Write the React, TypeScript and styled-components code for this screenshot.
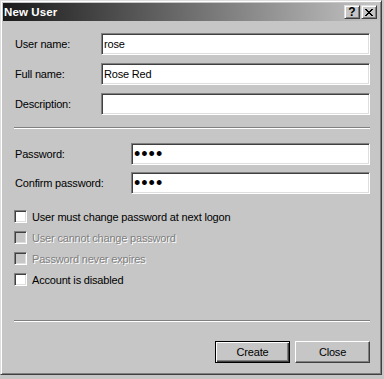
import React from "react"
import styled, { createGlobalStyle } from "styled-components"

const FACE = "#c6c6c6";

const GlobalStyle = createGlobalStyle`
  html, body {
    margin: 0;
    padding: 0;
    background: ${FACE};
  }
  body {
    font-family: "Liberation Sans", Arial, sans-serif;
    font-size: 11px;
    letter-spacing: -0.18px;
    color: #000;
  }
`;

const Window = styled.div`
  box-sizing: border-box;
  width: 382px;
  height: 375px;
  padding: 2px;
  background: ${FACE};
  border: 1px solid;
  border-color: #dedede #404040 #404040 #dedede;
  box-shadow: inset 1px 1px #fff, inset -1px -1px #808080;
  display: flex;
  flex-direction: column;
`;

const TitleBar = styled.div`
  height: 18px;
  flex-shrink: 0;
  display: flex;
  align-items: center;
  padding: 0 2px 0 1px;
  background: linear-gradient(to right, #1a1a1a 0%, #5e5e5e 40%, #c4c4c4 100%);
`;

const Title = styled.span`
  flex: 1;
  color: #fff;
  font-weight: bold;
  font-size: 11.5px;
  letter-spacing: 0.1px;
  line-height: 18px;
`;

const CaptionButton = styled.button`
  box-sizing: border-box;
  width: 16px;
  height: 14px;
  margin: 0 0 0 1px;
  padding: 0;
  background: ${FACE};
  border: 1px solid;
  border-color: #dedede #404040 #404040 #dedede;
  box-shadow: inset 1px 1px #fff, inset -1px -1px #808080;
  display: flex;
  align-items: center;
  justify-content: center;
  font-family: "Liberation Sans", Arial, sans-serif;
  font-weight: bold;
  font-size: 12px;
  line-height: 1;
  color: #000;
`;

const Body = styled.div`
  flex: 1;
  padding: 12px 9px 0 12px;
  display: flex;
  flex-direction: column;
`;

const FieldGrid = styled.div<{ $labelWidth: number; $gap: number }>`
  display: grid;
  grid-template-columns: ${p => p.$labelWidth}px 1fr;
  row-gap: ${p => p.$gap}px;
  align-items: center;
`;

const FieldLabel = styled.label`
  white-space: nowrap;
`;

const TextBox = styled.input<{ $secret?: boolean }>`
  box-sizing: border-box;
  width: 100%;
  height: 22px;
  margin: 0;
  padding: 0 2px;
  background: #fff;
  border: 1px solid;
  border-color: #808080 #fff #fff #808080;
  box-shadow: inset 1px 1px #404040, inset -1px -1px #dedede;
  outline: none;
  font-family: "Liberation Sans", Arial, sans-serif;
  font-size: ${p => (p.$secret ? "18px" : "11px")};
  letter-spacing: ${p => (p.$secret ? "1px" : "-0.18px")};
  color: #000;
`;

const Separator = styled.hr<{ $top: number; $bottom: number }>`
  height: 0;
  margin: ${p => p.$top}px 0 ${p => p.$bottom}px -1px;
  border: none;
  border-top: 1px solid #808080;
  border-bottom: 1px solid #fff;
`;

const CheckList = styled.div`
  margin-top: 12px;
  display: flex;
  flex-direction: column;
`;

const CheckRow = styled.label<{ $disabled?: boolean }>`
  height: 21px;
  margin-left: -1px;
  display: flex;
  align-items: center;
  gap: 5px;
  color: ${p => (p.$disabled ? "#808080" : "#000")};
  text-shadow: ${p => (p.$disabled ? "1px 1px 0 #fff" : "none")};
`;

const Box = styled.span<{ $disabled?: boolean }>`
  box-sizing: border-box;
  width: 13px;
  height: 13px;
  flex-shrink: 0;
  background: ${p => (p.$disabled ? FACE : "#fff")};
  border: 1px solid;
  border-color: #808080 #fff #fff #808080;
  box-shadow: inset 1px 1px #404040, inset -1px -1px #dedede;
`;

const ButtonRow = styled.div`
  display: flex;
  justify-content: flex-end;
  gap: 5px;
`;

const PushButton = styled.button<{ $default?: boolean }>`
  box-sizing: border-box;
  width: 75px;
  height: 22px;
  margin: 0;
  padding: 0;
  background: ${FACE};
  border: 1px solid;
  border-color: ${p => (p.$default ? "#000" : "#fff #404040 #404040 #fff")};
  box-shadow: ${p =>
    p.$default
      ? "inset 1px 1px #fff, inset -1px -1px #404040, inset -2px -2px #808080"
      : "inset -1px -1px #808080"};
  font-family: "Liberation Sans", Arial, sans-serif;
  font-size: 11px;
  letter-spacing: -0.18px;
  color: #000;
`;

const CloseGlyph = () => (
  <svg width="8" height="7" viewBox="0 0 8 7" shapeRendering="crispEdges">
    <path
      d="M0 0h2v1h-2zM6 0h2v1h-2zM1 1h2v1h-2zM5 1h2v1h-2zM2 2h4v1h-4zM3 3h2v1h-2zM2 4h4v1h-4zM1 5h2v1h-2zM5 5h2v1h-2zM0 6h2v1h-2zM6 6h2v1h-2z"
      fill="#000"
    />
  </svg>
);

const checks = [
  { text: "User must change password at next logon", disabled: false },
  { text: "User cannot change password", disabled: true },
  { text: "Password never expires", disabled: true },
  { text: "Account is disabled", disabled: false },
];

export default function App() {
  return (
    <>
      <GlobalStyle />
      <Window>
        <TitleBar>
          <Title>New User</Title>
          <CaptionButton>?</CaptionButton>
          <CaptionButton>
            <CloseGlyph />
          </CaptionButton>
        </TitleBar>
        <Body>
          <FieldGrid $labelWidth={86} $gap={8}>
            <FieldLabel>User name:</FieldLabel>
            <TextBox readOnly value="rose" />
            <FieldLabel>Full name:</FieldLabel>
            <TextBox readOnly value="Rose Red" />
            <FieldLabel>Description:</FieldLabel>
            <TextBox readOnly value="" />
          </FieldGrid>
          <Separator $top={12} $bottom={14} />
          <FieldGrid $labelWidth={116} $gap={7}>
            <FieldLabel>Password:</FieldLabel>
            <TextBox readOnly $secret value={"\u2022\u2022\u2022\u2022"} />
            <FieldLabel>Confirm password:</FieldLabel>
            <TextBox readOnly $secret value={"\u2022\u2022\u2022\u2022"} />
          </FieldGrid>
          <CheckList>
            {checks.map(c => (
              <CheckRow key={c.text} $disabled={c.disabled}>
                <Box $disabled={c.disabled} />
                {c.text}
              </CheckRow>
            ))}
          </CheckList>
          <Separator $top={30} $bottom={19} />
          <ButtonRow>
            <PushButton $default>Create</PushButton>
            <PushButton>Close</PushButton>
          </ButtonRow>
        </Body>
      </Window>
    </>
  );
}
